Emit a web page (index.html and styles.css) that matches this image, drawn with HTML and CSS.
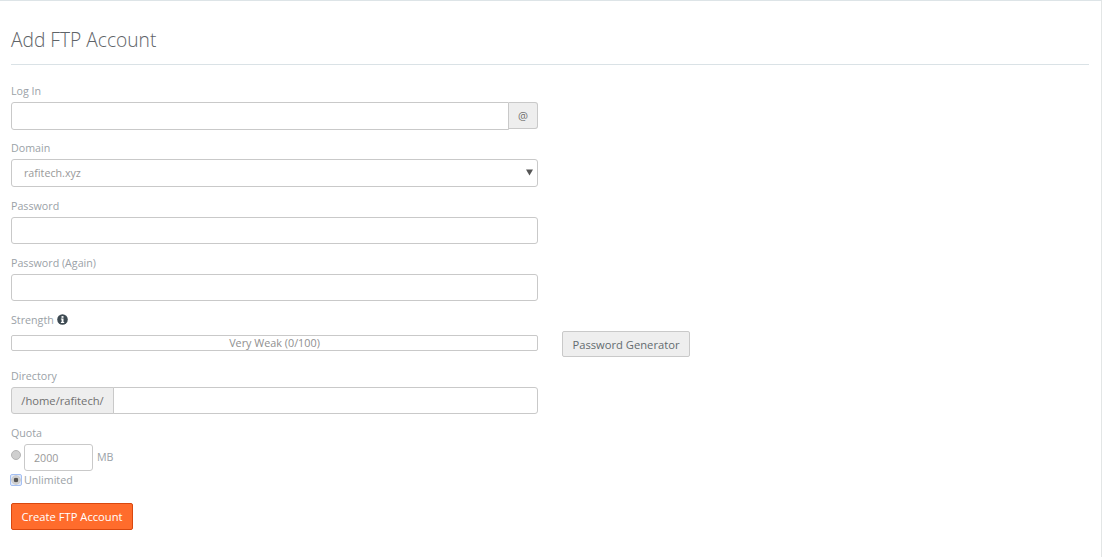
FILE: index.html
```html
<!DOCTYPE html>
<html lang="en">
<head>
<meta charset="utf-8">
<title>Add FTP Account</title>
<link rel="stylesheet" href="styles.css">
</head>
<body>
<main class="panel">
  <h2 class="title">Add FTP Account</h2>
  <form class="form">
    <div class="group">
      <label class="label">Log In</label>
      <div class="input-group">
        <input class="control joined-right" type="text">
        <span class="addon addon-right">@</span>
      </div>
    </div>
    <div class="group">
      <label class="label">Domain</label>
      <div class="select-wrap">
        <select class="control select"><option>rafitech.xyz</option></select>
        <svg class="caret" width="7" height="7" viewBox="0 0 7 7"><path d="M0 .5h7L3.5 6.5z" fill="#555"/></svg>
      </div>
    </div>
    <div class="group">
      <label class="label">Password</label>
      <input class="control" type="password">
    </div>
    <div class="group">
      <label class="label">Password (Again)</label>
      <input class="control" type="password">
    </div>
    <div class="strength-row">
      <div class="strength-col">
        <label class="label strength-label">Strength
          <svg class="info" width="11" height="11" viewBox="0 0 11 11"><circle cx="5.5" cy="5.5" r="5.3" fill="#3d4a52"/><rect x="4.5" y="2.1" width="2" height="1.7" fill="#fff"/><path d="M3.9 4.6h2.6v3.3h.7v1H3.9v-1h.7V5.6h-.7z" fill="#fff"/></svg>
        </label>
        <div class="meter">Very Weak (0/100)</div>
      </div>
      <button class="btn btn-default" type="button">Password Generator</button>
    </div>
    <div class="group">
      <label class="label">Directory</label>
      <div class="input-group">
        <span class="addon addon-left">/home/rafitech/</span>
        <input class="control joined-left" type="text">
      </div>
    </div>
    <div class="quota">
      <label class="label">Quota</label>
      <div class="quota-row">
        <input class="radio radio-off" type="radio" name="quota">
        <input class="control quota-input" type="text" value="2000">
        <span class="unit">MB</span>
      </div>
      <div class="unlimited-row">
        <input class="radio radio-on" type="radio" name="quota" checked>
        <span class="unit-label">Unlimited</span>
      </div>
    </div>
    <button class="btn btn-primary" type="button">Create FTP Account</button>
  </form>
</main>
</body>
</html>
```
FILE: styles.css
```css
* { box-sizing: border-box; }
html, body { margin: 0; height: 100%; }
body {
  background: #fff;
  font-family: "Open Sans", "Liberation Sans", sans-serif;
  font-size: 10.7px;
  color: #9ba2a7;
  overflow: hidden;
}
.panel {
  width: 1102px;
  height: 557px;
  border-top: 1px solid #dde4e7;
  border-right: 1px solid #e3e6e6;
  padding: 0 12px 0 11px;
}
.title {
  margin: 0;
  height: 64px;
  padding-top: 26px;
  font-size: 19.2px;
  line-height: 26px;
  font-weight: 300;
  color: #5e6367;
  border-bottom: 1px solid #dae2e6;
}
.form { width: 527px; padding-top: 17px; }
.label {
  display: block;
  height: 20px;
  line-height: 18px;
  font-size: 10.7px;
  color: #9ba2a7;
}
.strength-label { line-height: 17px; }
.group { height: 57.4px; }
.control {
  display: block;
  width: 100%;
  height: 27px;
  border: 1px solid #c9c9c9;
  border-radius: 3px;
  background: #fff;
  font-family: inherit;
  font-size: 10.7px;
  color: #999;
  padding: 0 12px;
  outline: none;
}
.input-group { display: flex; }
.input-group .control { flex: 1; width: auto; min-width: 0; }
.joined-right { border-radius: 3px 0 0 3px; height: 28px; }
.joined-left { border-radius: 0 3px 3px 0; }
.addon {
  background: #eee;
  border: 1px solid #c9c9c9;
  color: #707070;
  font-size: 11.2px;
  display: flex;
  align-items: center;
  justify-content: center;
  height: 27px;
}
.addon-right { width: 29px; border-left: 0; border-radius: 0 3px 3px 0; }
.addon-left { width: 103px; margin-right: -1px; border-radius: 3px 0 0 3px; }
.select-wrap { position: relative; }
.select { appearance: none; height: 28px; }
.caret { position: absolute; right: 5px; top: 10px; }
.strength-row { display: flex; height: 55.4px; }
.strength-col { width: 527px; flex: none; }
.meter {
  height: 16px;
  margin-top: 3.4px;
  border: 1px solid #c9c9c9;
  border-radius: 2px;
  text-align: center;
  font-size: 10.8px;
  line-height: 14px;
  color: #8f8f8f;
}
.info { vertical-align: -1.5px; }
.btn {
  font-family: inherit;
  font-size: 11.2px;
  border-radius: 2px;
  height: 27px;
  padding: 0;
  cursor: pointer;
}
.btn-default {
  flex: none;
  width: 128px;
  height: 26px;
  margin: 19.4px 0 0 24px;
  padding-top: 2px;
  background: #eee;
  border: 1px solid #c9c9c9;
  color: #636b6f;
}
.quota { height: 70px; }
.quota-row { display: flex; align-items: flex-start; height: 27px; }
.radio { appearance: none; margin: 0; width: 10px; height: 10px; flex: none; }
.radio-off {
  margin-top: 6px;
  border-radius: 50%;
  background: #cfcfcf;
  border: 1px solid #b5b5b5;
}
.quota-input { width: 69px; margin-left: 3px; padding: 0 9px; flex: none; }
.unit { margin-left: 4px; line-height: 26px; color: #9ba2a7; }
.unlimited-row { display: flex; align-items: center; height: 18px; }
.radio-on {
  border-radius: 1px;
  background: radial-gradient(circle, #555 0 2px, #cfcfcf 2.6px 4.5px, #dfe8fa 5px);
  outline: 1.5px solid #a3bff3;
}
.unit-label { margin-left: 3px; color: #9ba2a7; }
.btn-primary {
  display: block;
  width: 122px;
  margin-top: 8.6px;
  background: #ff6c2c;
  border: 1px solid #d9480f;
  color: #fff;
}
```
